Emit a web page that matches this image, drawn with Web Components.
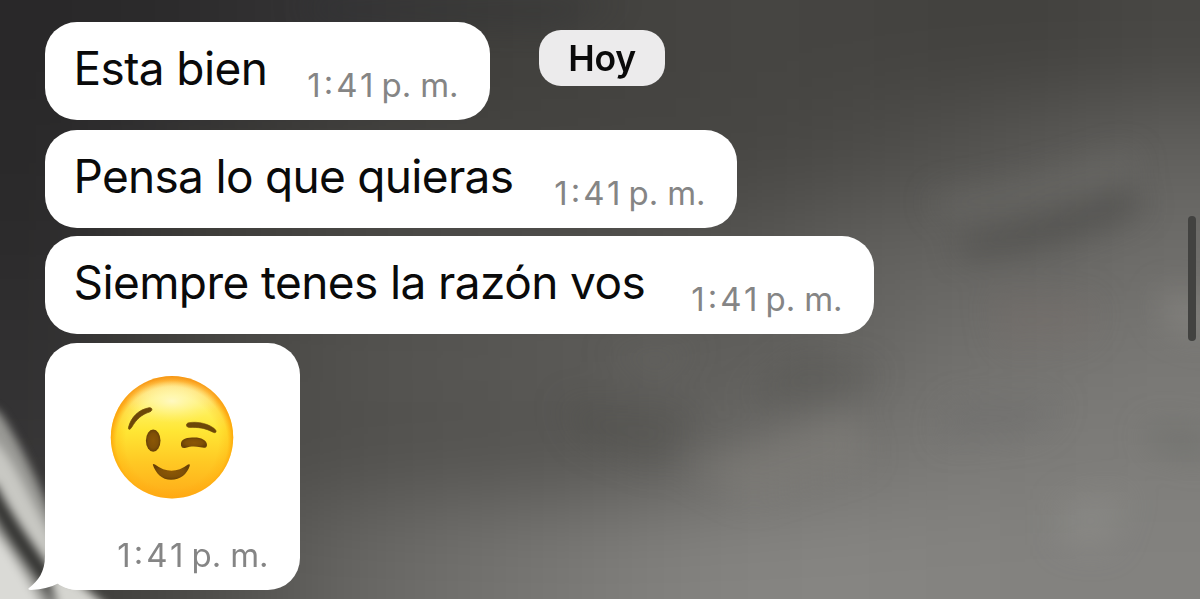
<!DOCTYPE html>
<html lang="es">
<head>
<meta charset="utf-8">
<title>Chat</title>
<style>
html,body{margin:0;height:100%;overflow:hidden;background:#4a4a47}
body{font-family:Inter,"Liberation Sans",sans-serif}
</style>
</head>
<body>
<chat-screen>
  <date-pill slot="date">Hoy</date-pill>
  <chat-bubble time="1:41" style="--w:445px;--ls:-.62px">Esta bien</chat-bubble>
  <chat-bubble time="1:41" style="--w:692px;--ls:-.7px;margin:1px 0 -1px">Pensa lo que quieras</chat-bubble>
  <chat-bubble time="1:41" style="--w:829px;--ls:-.6px">Siempre tenes la razón vos</chat-bubble>
  <chat-bubble time="1:41" tail style="--w:255px"><wink-emoji></wink-emoji></chat-bubble>
</chat-screen>
<script>
class ChatWallpaper extends HTMLElement{
  constructor(){
    super();
    const rows=[
      [0x29,0x2b,0x30,0x37,0x3e,0x42,0x44,0x46,0x45,0x43,0x43,0x48],
      [0x2a,0x33,0x3c,0x42,0x44,0x45,0x46,0x47,0x4b,0x52,0x5a,0x61],
      [0x2c,0x3a,0x42,0x48,0x4c,0x4e,0x52,0x56,0x60,0x65,0x65,0x6e],
      [0x31,0x40,0x4a,0x53,0x57,0x5b,0x5f,0x60,0x66,0x70,0x74,0x78],
      [0x36,0x45,0x4b,0x50,0x54,0x55,0x5d,0x6b,0x74,0x7a,0x7c,0x7e],
      [0x3c,0x46,0x55,0x66,0x70,0x78,0x80,0x85,0x86,0x84,0x83,0x83]];
    let cells='';
    for(let r=-1;r<7;r++)for(let c=-1;c<13;c++){
      const v=rows[Math.max(0,Math.min(5,r))][Math.max(0,Math.min(11,c))];
      const b=Math.max(0,v-(v>0x38?4:0));
      cells+=`<rect x="${c*100}" y="${r*100}" width="101" height="101" fill="rgb(${v},${v-1},${b})"/>`;
    }
    this.attachShadow({mode:'open'}).innerHTML=`
    <style>:host{display:block;width:100%;height:100%}svg{display:block}</style>
    <svg width="1200" height="599" viewBox="0 0 1200 599" aria-hidden="true">
      <defs>
        <filter id="b" filterUnits="userSpaceOnUse" x="-100" y="-100" width="1400" height="800" color-interpolation-filters="sRGB"><feGaussianBlur stdDeviation="42"/></filter>
        <filter id="m" filterUnits="userSpaceOnUse" x="-100" y="-100" width="1400" height="800" color-interpolation-filters="sRGB"><feGaussianBlur stdDeviation="16"/></filter>
        <filter id="s" filterUnits="userSpaceOnUse" x="-100" y="200" width="500" height="500" color-interpolation-filters="sRGB"><feGaussianBlur stdDeviation="5"/></filter>
      </defs>
      <g filter="url(#b)">${cells}</g>
      <g filter="url(#m)">
        <path d="M955 242Q1040 225 1130 190L1145 208Q1070 242 965 256Z" fill="#3e3e3b" opacity=".52"/>
        <path d="M930 195Q1020 185 1130 150L1140 170Q1030 210 940 215Z" fill="#84847f" opacity=".25"/>
        <path d="M300 0L620 0L560 22L320 18Z" fill="#2c2d31" opacity=".5"/>
        <path d="M600 350L700 345L660 380Z" fill="#74756f" opacity=".2"/>
        <path d="M560 400L700 410L660 470L580 440Z" fill="#454541" opacity=".22"/>
        <path d="M800 350L880 370L860 395L800 405L740 400Z" fill="#484945" opacity=".25"/>
        <path d="M680 465L780 435L850 410L870 460L750 500Z" fill="#8f8b85" opacity=".3"/>
        <path d="M950 405L1060 400L1040 430L940 440Z" fill="#686a68" opacity=".4"/>
        <path d="M990 290L1100 300L1090 340L1000 350Z" fill="#7a706a" opacity=".25"/>
        <path d="M1150 425L1210 432V460L1145 445Z" fill="#646561" opacity=".45"/>
        <path d="M1160 290L1210 300V340L1165 325Z" fill="#96938e" opacity=".4"/>
        <path d="M1060 500L1130 490L1110 550L1060 545Z" fill="#9a9b96" opacity=".25"/>
      </g>
      <g filter="url(#s)">
        <path d="M-20 400L0 413C25 450 42 492 64 545L95 620H-30Z" fill="#999995"/>
        <path d="M-10 437C12 455 25 490 50 535L60 575C30 555 5 510-10 490Z" fill="#c8c8c3"/>
        <path d="M-12 486C10 530 35 560 70 612" fill="none" stroke="#343432" stroke-width="16"/>
        <path d="M-20 518L0 538Q20 565 48 615H-20Z" fill="#dadad6"/>
        <path d="M48 575L80 584L118 615H60Z" fill="#d5d5d0"/>
      </g>
    </svg>`;
  }
}
class ChatScreen extends HTMLElement{
  constructor(){
    super();
    this.attachShadow({mode:'open'}).innerHTML=`
    <style>
    :host{display:block;position:relative;width:1200px;height:599px;overflow:hidden}
    chat-wallpaper{position:absolute;inset:0}
    main{position:relative;display:flex;flex-direction:column;align-items:flex-start;gap:9px;padding:22.3px 0 0 45px}
    .date{position:absolute;left:539px;top:30px}
    .thumb{position:absolute;left:1188px;top:216px;width:8px;height:125px;border-radius:4px;background:#424240}
    </style>
    <chat-wallpaper></chat-wallpaper>
    <main><slot></slot></main>
    <div class="date"><slot name="date"></slot></div>
    <div class="thumb"></div>`;
  }
}
class DatePill extends HTMLElement{
  constructor(){
    super();
    this.attachShadow({mode:'open'}).innerHTML=`
    <style>:host{display:flex;box-sizing:border-box;width:126px;height:56px;align-items:center;justify-content:center;border-radius:22px;background:#ecebec;color:#0a0a0a;font-size:35.5px;font-weight:600;line-height:54px;padding-top:2px;letter-spacing:-.2px}</style>
    <span><slot></slot></span>`;
  }
}
class ChatBubble extends HTMLElement{
  constructor(){
    super();
    const tail=this.hasAttribute('tail');
    this.attachShadow({mode:'open'}).innerHTML=`
    <style>
    :host{display:flex;position:relative;box-sizing:border-box;width:var(--w);height:98px;justify-content:space-between;padding:0 31.5px 0 29px;border-radius:32px;background:#fff;color:#0a0a0a;white-space:nowrap}
    :host([tail]){height:246.5px;flex-direction:column;padding:33px 31.5px 0 65px}
    .msg{font-size:46px;line-height:56px;letter-spacing:var(--ls);padding-top:18px;margin-left:-.5px}
    :host([tail]) .msg{padding:0;margin:0;line-height:0}
    .time{display:flex;font-size:33px;line-height:40px;padding-top:43px;color:#858585;letter-spacing:-.1px}
    :host([tail]) .time{padding:0 0 15px;justify-content:flex-end}
    .time span:first-child{letter-spacing:3.1px;margin-right:5px;font-feature-settings:"case"}
    .tail{position:absolute;left:-17px;bottom:0}
    </style>
    <div class="msg"><slot></slot></div>
    <div class="time"><span>${this.getAttribute('time')}</span><span>p. m.</span></div>
    ${tail?`<svg class="tail" width="60" height="60" viewBox="0 0 60 60" aria-hidden="true"><path d="M17 0V26C17 42 10 51 1 58Q-1 60 3 60Q20 59 31 53Q38 60 50 60L60 30Z" fill="#fff"/></svg>`:''}`;
  }
}
class WinkEmoji extends HTMLElement{
  constructor(){
    super();
    this.attachShadow({mode:'open'}).innerHTML=`
    <style>:host{display:block;width:124px;height:124px}svg{display:block}</style>
    <svg width="124" height="124" viewBox="0 0 124 124" role="img" aria-label="Guiño">
      <defs>
        <linearGradient id="g" x1="0" y1="0" x2="0" y2="1"><stop offset="0" stop-color="#fff8c4"/><stop offset=".12" stop-color="#fff6a8"/><stop offset=".28" stop-color="#fff05c"/><stop offset=".45" stop-color="#ffe634"/><stop offset=".7" stop-color="#ffc924"/><stop offset="1" stop-color="#ffab18"/></linearGradient>
        <radialGradient id="r" cx=".5" cy=".54" r=".54"><stop offset=".7" stop-color="#ff9800" stop-opacity="0"/><stop offset=".84" stop-color="#ffa000" stop-opacity=".22"/><stop offset=".93" stop-color="#fd9500" stop-opacity=".75"/><stop offset="1" stop-color="#f58a00" stop-opacity=".9"/></radialGradient>
        <radialGradient id="h"><stop offset="0" stop-color="#fff9c8" stop-opacity=".9"/><stop offset=".5" stop-color="#fff7a8" stop-opacity=".5"/><stop offset="1" stop-color="#fff080" stop-opacity="0"/></radialGradient>
        <radialGradient id="e"><stop offset="0" stop-color="#8b5706"/><stop offset=".65" stop-color="#805006"/><stop offset="1" stop-color="#684006"/></radialGradient>
      </defs>
      <circle cx="62" cy="61.3" r="61.2" fill="url(#g)"/>
      <circle cx="62" cy="61.3" r="61.2" fill="url(#r)"/>
      <ellipse cx="62" cy="25" rx="46" ry="22" fill="url(#h)"/>
      <path d="M18.5 51.5C21 41 29 33.5 39 31.8C42.5 31.3 42.8 34.6 40 35.8C31.5 38.5 26.5 43 21.5 51.5C20 54 18 53.8 18.5 51.5Z" fill="#6d4708" stroke="#6d4708" stroke-width=".8"/>
      <ellipse cx="43.2" cy="64.6" rx="7.3" ry="11.2" fill="url(#e)"/>
      <path d="M78.5 46.8C88 45 100 48 105.5 53.8C107 56 105.5 57.5 103 56.2C95 52 88 51 79.5 51.5C75.8 51.5 75.5 47.6 78.5 46.8Z" fill="#6d4708" stroke="#6d4708" stroke-width=".6"/>
      <path d="M71 69.5C70 62 78 61.5 84.500 61.5C91 61.5 97 64 97 69C97 72.500 93.500 72 90.500 71.300C84.500 70 80.500 70.300 76 71.800Q71.500 73 71 69.500Z" fill="url(#e)"/>
      <path d="M42.800 88.700Q43 87.300 45 88.500Q61.500 101 78 88.500Q80.500 87.300 79.700 90C77 98 70.500 103.800 61 103.800C52 103.800 45.500 97 42.800 88.700Z" fill="url(#e)"/>
    </svg>`;
  }
}
customElements.define('chat-wallpaper',ChatWallpaper);
customElements.define('chat-screen',ChatScreen);
customElements.define('date-pill',DatePill);
customElements.define('chat-bubble',ChatBubble);
customElements.define('wink-emoji',WinkEmoji);
</script>
</body>
</html>
